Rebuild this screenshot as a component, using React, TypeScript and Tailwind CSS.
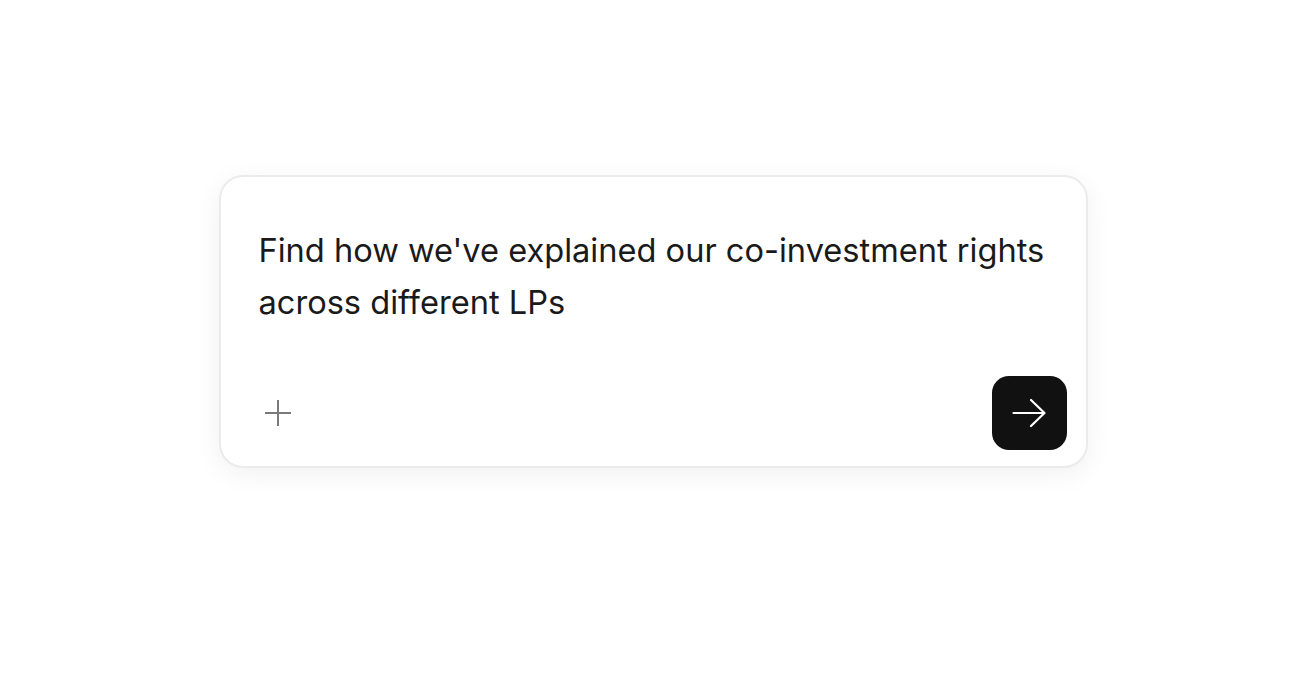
import React from "react";

const App = () => {
  return (
    <div className="min-h-screen w-full bg-white flex justify-center pt-[175px] font-['Inter',sans-serif]">
      <div className="w-[869px] h-[293px] rounded-[24px] border-2 border-[#ebebeb] bg-white shadow-[0_6px_28px_rgba(0,0,0,0.06)] flex flex-col justify-between">
        <p className="pl-[38px] pr-[20px] pt-[47px] text-[32.6px] leading-[52px] text-[#1a1a1a]">
          Find how we've explained our co-investment rights across different LPs
        </p>
        <div className="flex items-center justify-between pl-[44px] pr-[19px] pb-[16px]">
          <button className="w-[26px] h-[26px] text-[#7a7a7a]">
            <svg width="26" height="26" viewBox="0 0 26 26" fill="none" stroke="currentColor" strokeWidth="2">
              <path d="M13 0v26M0 13h26" />
            </svg>
          </button>
          <button className="w-[75px] h-[74px] rounded-[17px] bg-[#111111] flex items-center justify-center text-white">
            <svg width="34" height="30" viewBox="0 0 34 30" fill="none" stroke="currentColor" strokeWidth="2.2" strokeLinecap="round" strokeLinejoin="round">
              <path d="M1.5 15h31M19 2l13.5 13L19 28" />
            </svg>
          </button>
        </div>
      </div>
    </div>
  );
};

export default App;
